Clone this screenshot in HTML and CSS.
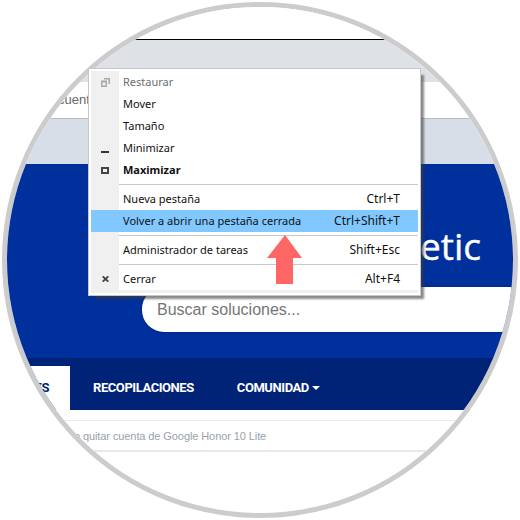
FILE: index.html
```html
<!DOCTYPE html>
<html lang="es">
<head>
<meta charset="utf-8">
<title>Menú de ventana</title>
<link rel="stylesheet" href="styles.css">
</head>
<body>
<div class="lens">
  <div class="page">
    <div class="top-space"></div>
    <div class="tabstrip"></div>
    <div class="toolbar"><span class="toolbar-text">cuenta</span></div>
    <div class="bookmarks"></div>
    <div class="hero">
      <div class="logo">etic</div>
      <div class="search">Buscar soluciones...</div>
    </div>
    <nav class="nav">
      <div class="nav-tab"><span class="nav-tab-text">TUTORIALES</span></div>
      <div class="nav-item rec">RECOPILACIONES</div>
      <div class="nav-item">COMUNIDAD <span class="caret"></span></div>
    </nav>
    <div class="gap"></div>
    <div class="crumb">Cómo quitar cuenta de Google Honor 10 Lite</div>
  </div>
</div>

<div class="menu">
  <div class="row"><span class="icon"><svg width="9" height="9" viewBox="0 0 9 9"><path d="M3 0h6v6H7.500V1.500H3z M0 2.500h6V9H0z M1.500 4.500V7.500H4.500V4.500z" fill="#a8a8a8" fill-rule="evenodd"/></svg></span><span class="label muted">Restaurar</span></div>
  <div class="row"><span class="icon"></span><span class="label">Mover</span></div>
  <div class="row"><span class="icon"></span><span class="label">Tamaño</span></div>
  <div class="row"><span class="icon"><svg class="ico-min" width="8" height="2" viewBox="0 0 8 2"><rect width="8" height="2" fill="#333"/></svg></span><span class="label">Minimizar</span></div>
  <div class="row"><span class="icon"><svg width="8" height="7" viewBox="0 0 8 7"><path d="M0 0h8v7H0z M2 2v3h4V2z" fill="#444" fill-rule="evenodd"/></svg></span><span class="label bold">Maximizar</span></div>
  <div class="sep-row"><span class="icon"></span><span class="sep"></span></div>
  <div class="row"><span class="icon"></span><span class="label">Nueva pestaña</span><span class="key">Ctrl+T</span></div>
  <div class="row hot"><span class="icon"></span><span class="label">Volver a abrir una pestaña cerrada</span><span class="key">Ctrl+Shift+T</span></div>
  <div class="sep-row"><span class="icon"></span><span class="sep"></span></div>
  <div class="row"><span class="icon"></span><span class="label">Administrador de tareas</span><span class="key">Shift+Esc</span></div>
  <div class="sep-row"><span class="icon"></span><span class="sep"></span></div>
  <div class="row"><span class="icon"><svg width="7" height="6" viewBox="0 0 7 6"><path d="M0.700 0.300L6.300 5.700M6.300 0.300L0.700 5.700" stroke="#444" stroke-width="1.800" fill="none"/></svg></span><span class="label">Cerrar</span><span class="key">Alt+F4</span></div>
  <div class="menu-foot"></div>
</div>

<svg class="arrow" width="36" height="49" viewBox="0 0 36 49"><path d="M18 0L35 23H26V49H9V23H0Z" fill="#ff6666"/></svg>
</body>
</html>
```
FILE: styles.css
```css
html, body {
  margin: 0;
  padding: 0;
  background: #fff;
}
body {
  width: 520px;
  height: 520px;
  overflow: hidden;
  position: relative;
  font-family: "Liberation Sans", Arial, sans-serif;
}
.lens {
  box-sizing: border-box;
  width: 516px;
  height: 516px;
  margin: 2px 0 0 2px;
  border: 5px solid #cccccc;
  border-radius: 50%;
  overflow: hidden;
  background: #fff;
}
.page {
  display: flex;
  flex-direction: column;
  margin-top: -7px;
}
.top-space {
  height: 39px;
  background: #fff;
}
.tabstrip {
  height: 42px;
  background: #dee1e6;
  border-top: 1px solid #000;
}
.toolbar {
  box-sizing: border-box;
  height: 37px;
  background: #fff;
  border-bottom: 1px solid #b8bcc2;
  padding: 10px 0 0 51px;
  font-size: 13px;
  color: #666;
  line-height: 16px;
}
.bookmarks {
  height: 45px;
  background: #d8dee8;
}
.hero {
  box-sizing: border-box;
  height: 194px;
  background: #00309c;
  padding-top: 123px;
  position: relative;
}
.logo {
  position: absolute;
  left: 413px;
  top: 60px;
  color: #fff;
  font-family: "Open Sans", sans-serif;
  font-size: 37px;
  line-height: 44px;
  -webkit-text-stroke: 0.4px #fff;
}
.search {
  box-sizing: border-box;
  margin-left: 135px;
  height: 45px;
  background: #fff;
  border-radius: 22px 0 0 22px;
  padding-left: 15px;
  font-family: "Liberation Sans", Arial, sans-serif;
  font-size: 16px;
  line-height: 45px;
  color: #757575;
  box-shadow: 0 0 3px #002277;
}
.nav {
  box-sizing: border-box;
  height: 52px;
  background: #002277;
  display: flex;
  align-items: flex-end;
  font-family: "Roboto", sans-serif;
  font-size: 13px;
  letter-spacing: -0.43px;
  font-weight: 700;
  color: #fff;
}
.nav-tab {
  box-sizing: border-box;
  flex: 0 0 63px;
  min-width: 0;
  height: 44px;
  background: #fff;
  color: #002277;
  line-height: 44px;
  padding-right: 21px;
  display: flex;
  justify-content: flex-end;
  white-space: nowrap;
}
.nav-tab-text {
  flex: none;
}
.nav-item {
  height: 44px;
  line-height: 44px;
  white-space: nowrap;
}
.rec {
  margin: 0 43px 0 23px;
}
.caret {
  display: inline-block;
  width: 0;
  height: 0;
  border-left: 4px solid transparent;
  border-right: 4px solid transparent;
  border-top: 4px solid #fff;
  vertical-align: 2px;
}
.gap {
  height: 10px;
  background: #fff;
}
.crumb {
  box-sizing: border-box;
  height: 32px;
  border-top: 1px solid #ececec;
  border-bottom: 2px solid #e8e8e8;
  padding-left: 44px;
  font-size: 11px;
  letter-spacing: -0.09px;
  line-height: 30px;
  color: #98a2ae;
  white-space: nowrap;
}
.menu {
  position: absolute;
  left: 88px;
  top: 68px;
  width: 333px;
  box-sizing: border-box;
  background: #fff;
  border: 1px solid #c8c8c8;
  padding: 2px;
  font-family: "Noto Sans", "Open Sans", sans-serif;
  font-size: 11px;
  color: #111;
  box-shadow: 5px 5px 2px -2px rgba(60, 60, 60, 0.6);
}
.row {
  display: flex;
  align-items: center;
  height: 22px;
}
.icon {
  flex: 0 0 28px;
  align-self: stretch;
  background: #f0f0f0;
  display: flex;
  align-items: center;
  justify-content: center;
}
.ico-min {
  margin-top: 8px;
}
.label {
  flex: 1;
  padding: 0 0 1px 4px;
  white-space: nowrap;
}
.muted {
  color: #6d6d6d;
}
.bold {
  font-weight: 700;
}
.key {
  padding: 0 18px 1px 0;
  font-size: 12px;
  white-space: nowrap;
}
.hot {
  background: #80c8ff;
}
.hot .icon {
  background: transparent;
}
.sep-row {
  display: flex;
  height: 7px;
}
.sep {
  flex: 1;
  height: 1px;
  margin-top: 3px;
  background: #c8c8c8;
}
.menu-foot {
  height: 3px;
  background: #f0f0f0;
}
.arrow {
  position: absolute;
  left: 267px;
  top: 235px;
}
```
